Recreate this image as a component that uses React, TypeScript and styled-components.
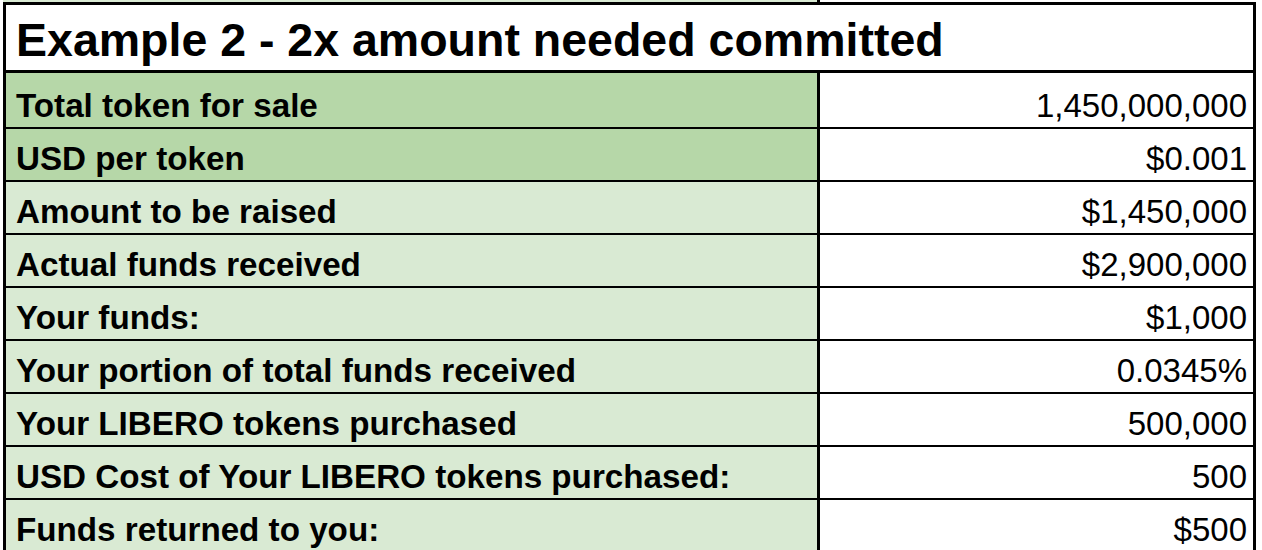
import React from "react";
import styled, { createGlobalStyle } from "styled-components";

const Global = createGlobalStyle`
  html, body { margin: 0; padding: 0; background: #ffffff; }
  body { font-family: "Liberation Sans", Arial, sans-serif; color: #000; overflow: hidden; }
`;

const Page = styled.div`
  width: 1262px;
  height: 550px;
  overflow: hidden;
  background: #ffffff;
`;

const Table = styled.div`
  margin-left: 3px;
  width: 1253px;
  display: grid;
  grid-template-columns: 817px 436px;
`;

const StubCell = styled.div<{ $bg: string; $divider?: boolean }>`
  height: 2px;
  background: ${(p) => p.$bg};
  border-right: ${(p) => (p.$divider ? "3px solid #000" : "none")};
`;

const Header = styled.div`
  grid-column: 1 / span 2;
  height: 71px;
  border: 3px solid #000;
  background: #fff;
  display: flex;
  align-items: flex-end;
  padding: 0 0 3px 10px;
  font-size: 46.5px;
  font-weight: 700;
  box-sizing: border-box;
  white-space: nowrap;
  line-height: 1.15;
`;

const LabelCell = styled.div<{ $h: number; $dark?: boolean }>`
  height: ${(p) => p.$h}px;
  background: ${(p) => (p.$dark ? "#b6d7a8" : "#d9ead3")};
  border-left: 3px solid #000;
  border-right: 3px solid #000;
  border-bottom: 2px solid #000;
  display: flex;
  align-items: flex-end;
  padding: 0 0 2px 10px;
  box-sizing: border-box;
  font-size: 33.2px;
  font-weight: 700;
  white-space: nowrap;
  line-height: 1.15;
`;

const ValueCell = styled.div<{ $h: number }>`
  height: ${(p) => p.$h}px;
  background: #fff;
  border-right: 3px solid #000;
  border-bottom: 2px solid #000;
  display: flex;
  align-items: flex-end;
  justify-content: flex-end;
  padding: 0 6px 2px 0;
  box-sizing: border-box;
  font-size: 33px;
  white-space: nowrap;
  line-height: 1.15;
`;

const rows: { label: string; value: string; dark?: boolean }[] = [
  { label: "Total token for sale", value: "1,450,000,000", dark: true },
  { label: "USD per token", value: "$0.001", dark: true },
  { label: "Amount to be raised", value: "$1,450,000" },
  { label: "Actual funds received", value: "$2,900,000" },
  { label: "Your funds:", value: "$1,000" },
  { label: "Your portion of total funds received", value: "0.0345%" },
  { label: "Your LIBERO tokens purchased", value: "500,000" },
  { label: "USD Cost of Your LIBERO tokens purchased:", value: "500" },
  { label: "Funds returned to you:", value: "$500" },
];

export default function App() {
  return (
    <Page>
      <Global />
      <Table>
        <StubCell $bg="#d9ead3" $divider />
        <StubCell $bg="#ffffff" />
        <Header>Example 2 - 2x amount needed committed</Header>
        {rows.map((r, i) => {
          const h = i === 0 ? 56 : 53;
          return (
            <React.Fragment key={r.label}>
              <LabelCell $h={h} $dark={r.dark}>{r.label}</LabelCell>
              <ValueCell $h={h}>{r.value}</ValueCell>
            </React.Fragment>
          );
        })}
      </Table>
    </Page>
  );
}
